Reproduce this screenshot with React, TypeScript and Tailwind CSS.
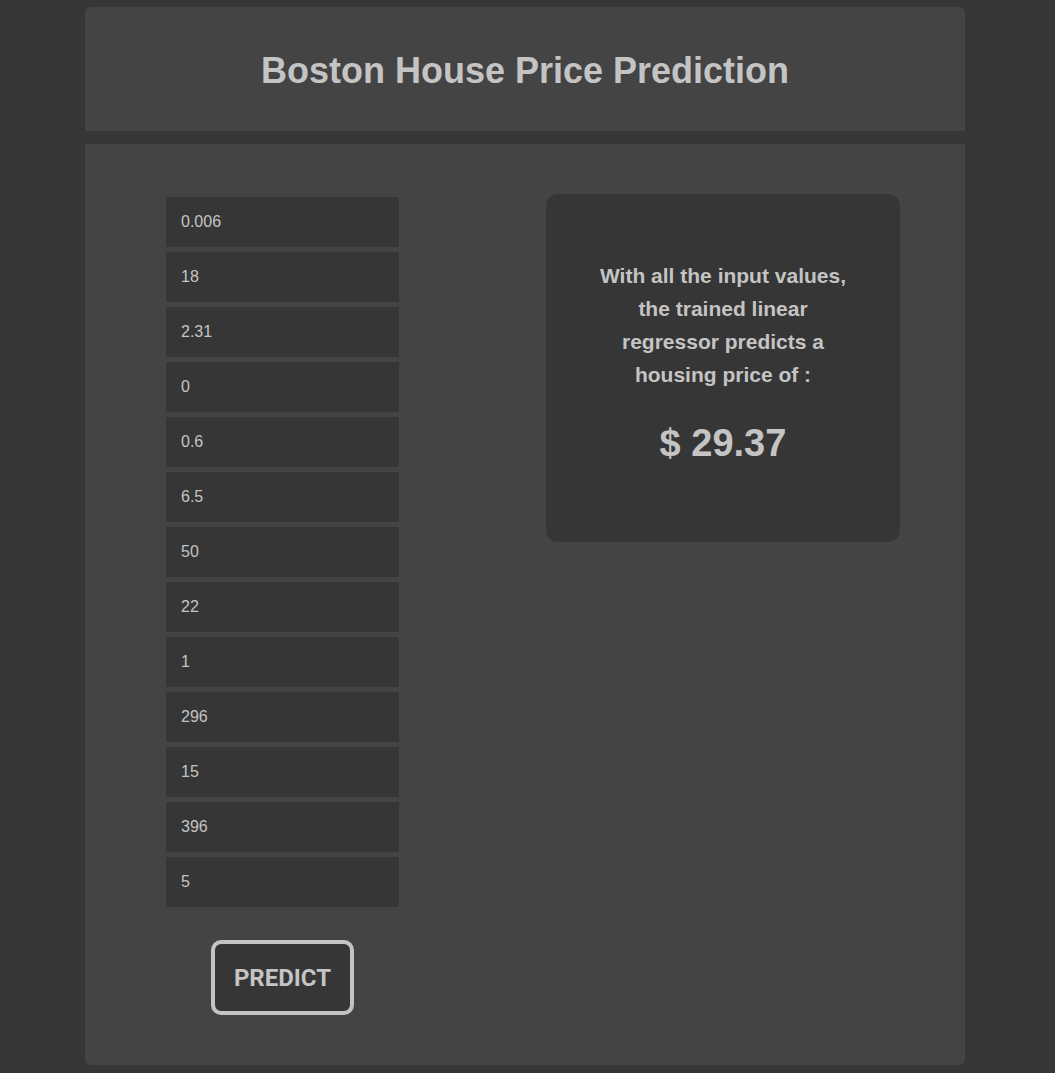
import React, { useState } from 'react';

const fields = ['0.006', '18', '2.31', '0', '0.6', '6.5', '50', '22', '1', '296', '15', '396', '5'];

export default function App() {
  const [values, setValues] = useState(fields);

  return (
    <div className="min-h-[1073px] bg-[#363636] pt-[7px] font-['Liberation_Sans',Arial,sans-serif] text-[#c4c4c4]">
      <div className="ml-[85px] w-[880px]">
        <div className="flex h-[124px] items-center justify-center rounded-t-[6px] bg-[#444444] pt-[4px]">
          <h1 className="text-[36px] font-bold">Boston House Price Prediction</h1>
        </div>
        <div className="mt-[13px] flex rounded-b-[6px] bg-[#444444] pb-[50px] pl-[81px] pr-[65px] pt-[50px]">
          <div className="flex w-[233px] flex-col items-center pt-[3px]">
            <div className="flex w-full flex-col gap-[5px]">
              {values.map((v, i) => (
                <input
                  key={i}
                  value={v}
                  onChange={(e) =>
                    setValues((prev) => prev.map((p, j) => (j === i ? e.target.value : p)))
                  }
                  className="h-[50px] w-full bg-[#363636] pl-[15px] text-[16px] text-[#c4c4c4] outline-none"
                />
              ))}
            </div>
            <button className="mt-[33px] h-[75px] w-[143px] rounded-[10px] border-4 border-[#c4c4c4] bg-[#363636] font-['Roboto',sans-serif] text-[24px] font-bold text-[#c4c4c4]">
              PREDICT
            </button>
          </div>
          <div className="ml-auto flex h-[348px] w-[354px] flex-col items-center rounded-[12px] bg-[#363636] pt-[65px]">
            <p className="text-center text-[21px] font-bold leading-[33px]">
              With all the input values,
              <br />
              the trained linear
              <br />
              regressor predicts a
              <br />
              housing price of :
            </p>
            <p className="mt-[30px] text-[38px] font-bold leading-[44px]">$ 29.37</p>
          </div>
        </div>
      </div>
    </div>
  );
}
